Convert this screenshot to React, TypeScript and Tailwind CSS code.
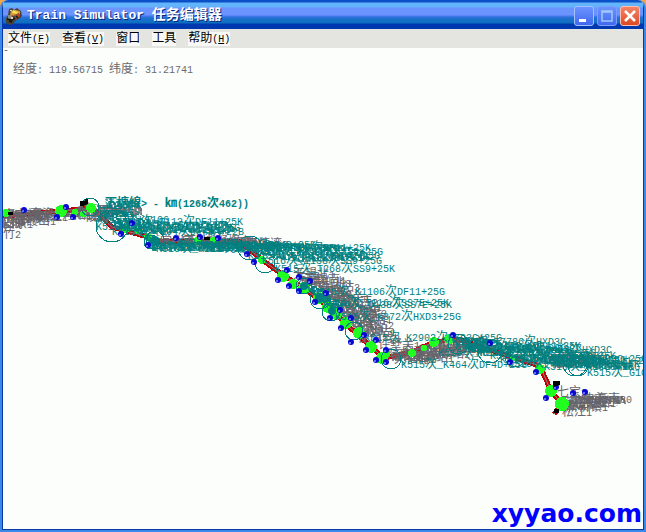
import React from 'react';

const TEAL = '#008080';
const GRAY = '#66646a';

type Label = [number, number, string];

const menus = [
  { label: '文件', hotkey: 'F' },
  { label: '查看', hotkey: 'V' },
  { label: '窗口' },
  { label: '工具' },
  { label: '帮助', hotkey: 'H' },
];

// station names
const stations: Label[] = [
  [3, 171, '南京站1'], [3, 180, '安东1'], [3, 190, '竹2'], [8, 174, '句容东1'],
  [14, 177, '栖霞山1'], [20, 172, '龙潭站2'], [30, 170, '高资1'], [38, 173, '镇江1'],
  [62, 171, '丹阳1'], [76, 170, '新丰镇3'], [86, 173, '陵口1'], [98, 167, '吕城1'],
  [160, 197, '常州西站1'], [182, 197, '常州站2'], [204, 198, '戚墅堰东1'], [232, 199, '洛社1'],
  [246, 200, '石塘湾2'],
  [293, 230, '无锡北1'], [296, 235, '无锡1'], [304, 236, '无锡南1'], [309, 239, '横山北3'],
  [318, 243, '硕放站3'], [322, 250, '望亭2'], [328, 254, '浒墅关1'], [336, 258, '苏州西2'],
  [340, 263, '苏州站1'], [345, 269, '官渎里3'], [350, 275, '外跨塘1'], [352, 281, '唯亭站2'],
  [354, 288, '正仪站1'], [358, 294, '昆山号3'], [378, 301, '许墅关1'],
  [388, 311, '陆家浜1'], [394, 315, '天福庵2'], [402, 308, '安亭站1'], [412, 314, '黄渡站1'],
  [418, 307, '封浜站2'], [428, 310, '南翔站1'], [438, 303, '桃浦站3'], [448, 300, '上海西2'],
  [456, 304, '江桥镇1'], [540, 315, '杨浦站3'], [552, 319, '张华浜2'], [566, 315, '北郊站1'],
  [557, 348, '七宝2'], [564, 359, '莘庄站1'], [570, 356, '上海南3'], [574, 359, '梅陇站1'],
  [584, 355, '上海南80'], [566, 363, '新桥镇1'], [562, 368, '松江1'],
];

// train services sitting on the line
const services: Label[] = [
  [98, 169, '南京站>'], [97, 175, 'K515次_K1106'], [117, 177, 'K515次_T113次DF11+25K'],
  [96, 182, 'K516次_K464'], [120, 183, 'K51次_1045次DF4D+25G'],
  [112, 187, 'K515次_T104次DF4DA+22B'], [150, 201, 'K515次_T7786次DF11+25K'],
  [156, 204, 'K516次_K282次SS7E+25G'], [160, 200, 'K515次_K372次SS9+25K'],
  [173, 203, 'K515次_1228次HXD3C+25G'], [190, 200, 'K515次_T116次DF4D+25K'],
  [206, 204, 'K516次_K290次DF11+25G'], [239, 203, 'K515次_T7787次DF11+25K'],
  [257, 207, 'K515次_K1805次SS9+25G'], [248, 211, 'K515次_T7785次DF4D+25G'],
  [262, 216, 'K516次_T138次SS9+25G'], [275, 224, 'K515次_T268次SS9+25K'],
  [313, 247, 'K515次_K1106次DF11+25G'], [323, 258, 'K515次_T116次SS7E+25K'],
  [326, 260, 'K516次_D138次SS7E+25K'], [335, 272, 'K515次_K372次HXD3+25G'],
  [364, 293, 'K515次_K2902次HXD3C+25G'], [401, 320, 'K515次_K464次DF4D+25G'],
  [438, 308, 'K515次_K284次HXD3C'], [452, 297, 'K515次_T7786次HXD3C'],
  [455, 301, 'K515次_1462次DF11+25K'], [467, 304, 'K516次_K188次HXD3C'],
  [476, 308, 'K515次_T110次SS9+25G'], [504, 305, 'K515次_D412次HXD3C'],
  [490, 311, 'K515次_K526次SS7E+25K'], [500, 315, 'K515次_T132次DF11+25G'],
  [515, 314, 'K515次_K518次HXD3C+25G'], [508, 319, 'K516次_T7786次DF4D+25K'],
  [530, 316, 'K515次_T104次DF11+25G'], [544, 322, 'K515次_K8358+25G'],
  [587, 328, 'K515次_G1002'],
];

// areas where labels pile up, far too dense to be read
const grayPiles = [
  '3,162 40,162 46,166 78,164 78,169 46,170 40,174 30,173 20,180 3,180',
  '76,160 86,154 100,157 142,159 142,167 112,170 98,174 78,170',
  '152,190 238,190 262,192 262,197 152,197',
  '296,228 304,228 320,235 340,238 352,246 360,256 376,262 378,274 384,284 378,290 364,288 346,272 316,247',
  '390,304 410,303 436,293 481,290 498,296 494,305 452,308 428,313 392,313',
  '544,308 600,308 606,317 556,320',
  '572,347 624,348 626,356 612,358 585,362 566,362',
];

const tealPiles = [
  '105,151 140,152 139,159 107,160',
  '104,164 122,162 142,170 170,174 228,173 238,183 220,187 178,184 156,188 140,182 116,181',
  '114,172 140,178 156,190 150,198 146,192 132,180 112,178',
  '152,195 230,194 298,195 342,197 364,203 372,212 300,214 268,209 250,203 152,203',
  '304,234 318,239 332,250 350,256 334,261 324,255 308,242',
  '454,288 480,290 545,298 584,303 600,310 632,315 634,322 570,320 520,311 470,303',
];

const circles = [
  [90, 159, 9], [112, 178, 16], [155, 192, 9], [151, 194, 7], [250, 200, 12], [265, 215, 10],
  [304, 238, 8], [320, 251, 10], [331, 264, 9], [354, 283, 9], [391, 311, 10],
  [458, 296, 10], [490, 303, 12], [515, 309, 10], [575, 316, 12], [578, 318, 10],
];

const blobs = [
  [6, 165, 4], [61, 163, 6], [75, 164, 3], [91, 160, 5], [126, 181, 4], [138, 182, 4],
  [148, 189, 4], [197, 193, 4], [213, 192, 3], [262, 212, 4], [283, 228, 6], [293, 236, 5],
  [304, 240, 6], [319, 250, 6], [328, 259, 6], [336, 266, 6], [346, 275, 6], [359, 285, 6],
  [371, 299, 6], [382, 310, 6], [386, 306, 4], [434, 294, 5], [449, 291, 5], [540, 321, 5],
  [551, 343, 6], [562, 356, 7], [412, 305, 4], [424, 300, 3], [513, 310, 3], [83, 166, 3],
];

const signals = [
  [24, 162], [66, 159], [57, 169], [73, 169], [121, 186], [132, 175], [148, 197],
  [176, 190], [200, 189], [218, 190], [247, 206], [254, 214], [287, 222], [278, 232],
  [299, 229], [289, 238], [310, 233], [299, 243], [326, 245], [315, 254], [340, 262],
  [330, 270], [351, 270], [341, 280], [364, 287], [351, 294], [376, 292], [366, 302],
  [386, 302], [376, 312], [386, 314], [490, 295], [510, 314], [536, 324], [546, 350],
  [556, 339], [573, 345], [585, 344], [453, 287],
];

const route =
  '0,168 30,166 61,163 92,160 112,179 148,189 155,193 240,194 265,214 283,227 304,240 328,259 346,276 371,299 384,310 412,304 434,294 458,291 490,302 540,318 551,343 562,356 554,366';

const MixedText = ({ text, className = '' }: { text: string; className?: string }) => (
  <>
    {(text.match(/[ -~]+|[^ -~]+/g) ?? []).map((part, i) => (
      <span key={i} className={/[ -~]/.test(part) ? className : ''}>{part}</span>
    ))}
  </>
);

const MapLabel = ({ x, y, text, bold }: { x: number; y: number; text: string; bold?: boolean }) => (
  <text x={x} y={y} fontSize="12" fontWeight={bold ? 700 : 400}>
    {(text.match(/[ -~]+|[^ -~]+/g) ?? []).map((part, i) => (
      <tspan key={i} fontSize={/[ -~]/.test(part) ? 10 : 12}>{part}</tspan>
    ))}
  </text>
);

const ScribblePattern = ({ id, color }: { id: string; color: string }) => (
  <pattern id={id} width="29" height="17" patternUnits="userSpaceOnUse">
    <path
      d="M0 1h5M7 1h3M12 1h7M21 1h6M2 3h4M9 3h8M20 3h3M26 3h3M0 5h7M10 5h4M16 5h9M3 7h6M12 7h3M18 7h7M27 7h2M0 9h4M6 9h8M17 9h3M22 9h6M2 11h7M12 11h7M21 11h3M0 13h3M6 13h5M14 13h9M25 13h4M4 15h7M15 15h4M22 15h5M2 0v6M5 5v8M8 0v4M9 7v9M13 0v12M16 4v10M19 1v5M20 8v9M23 0v8M25 7v8M28 2v10M1 9v7M11 10v6M17 13v4M4 8l5 7M22 4l5 6"
      fill="none"
      stroke={color}
      strokeWidth="1.4"
    />
  </pattern>
);

const TrainIcon = () => (
  <svg width="18" height="18" viewBox="0 0 18 18" aria-hidden="true">
    <path d="M4 2l3-1 2 2 3-2 4 3 1 5-3 3-3 1-3 4-3 1-4-2v-5l2-3z" fill="#4a4438" />
    <path d="M6 4l4-1 5 1v3l-5 2-5-1z" fill="#d49a32" />
    <path d="M8 3l5 2-1 2-5-1z" fill="#f1de58" />
    <path d="M3 8h4v4H3z" fill="#8b8b80" />
    <path d="M9 8l5-2 1 3-4 3z" fill="#ac4a2b" />
    <path d="M2 12l5 1 3-2M4 14l3 1M11 9l2 2" stroke="#151510" strokeWidth="1.5" fill="none" />
    <path d="M5 3h2v1H5zM6 10h2v2H6z" fill="#d8d8c8" />
  </svg>
);

const TitleBar = () => (
  <header className="flex h-[29px] items-center pt-[2px] pr-[3px] pl-[2px] [background-image:linear-gradient(#0c50c8_0_2px,#0c50c8_2px,#64b4fc_3px_7px,#6c94ff_8px_15px,#4a78f0_16px,#2070d0_18px,#0c70c0_23px,#0038b0_24px_29px)]">
    <TrainIcon />
    <h1 className="ml-1 flex-1 text-sm leading-4 font-bold whitespace-pre text-white [text-shadow:1px_1px_#082878]">
      <MixedText text="Train Simulator 任务编辑器" className="text-[13px]" />
    </h1>
    <div className="flex gap-[3px]">
      <button type="button" aria-label="Minimize" className="h-5 w-5 rounded-[3px] border border-[#a0c0ff] bg-linear-to-b from-[#6c94ff] to-[#4068f0]">
        <svg viewBox="0 0 18 18"><path d="M4 12h7v3H4z" fill="#fff" /></svg>
      </button>
      <button type="button" aria-label="Maximize" disabled className="h-5 w-5 rounded-[3px] border border-[#78a0ff] bg-linear-to-b from-[#6c94ff] to-[#4068f0]">
        <svg viewBox="0 0 18 18"><path d="M4 4h10v10H4zM4 5h10" fill="none" stroke="#a0c8fa" strokeWidth="1.5" /></svg>
      </button>
      <button type="button" aria-label="Close" className="h-5 w-5 rounded-[3px] border border-[#ffc0b0] bg-linear-to-b from-[#f48468] to-[#dc4820]">
        <svg viewBox="0 0 18 18"><path d="M4 4l10 10M14 4L4 14" stroke="#fff" strokeWidth="2.5" /></svg>
      </button>
    </div>
  </header>
);

const MenuBar = () => (
  <nav className="flex h-[19px] items-center gap-3 bg-[#e4e4e0] px-[5px]">
    {menus.map(({ label, hotkey }) => (
      <button key={label} type="button" className="h-[14px] bg-[#f8f8f6] text-xs leading-[14px] text-black">
        {label}
        {hotkey && <span className="text-[10px]">(<u>{hotkey}</u>)</span>}
      </button>
    ))}
  </nav>
);

const RouteMap = () => (
  <svg className="absolute inset-0 h-full w-full" role="img" aria-label="线路图">
    <defs>
      <ScribblePattern id="gray-pile" color={GRAY} />
      <ScribblePattern id="teal-pile" color={TEAL} />
    </defs>
    <g transform="translate(-3 0)">
      <polyline points={route} fill="none" stroke="#c40000" strokeWidth="5" shapeRendering="crispEdges" />
      <polyline points={route} fill="none" stroke="#8a878c" strokeWidth="1" />
      {grayPiles.map((points) => (
        <polygon key={points} points={points} fill="url(#gray-pile)" />
      ))}
      <g fill={GRAY}>
        {stations.map(([x, y, text]) => (
          <MapLabel key={text + x} x={x} y={y} text={text} />
        ))}
      </g>
      {blobs.map(([x, y, r], i) => (
        <circle key={i} cx={x} cy={y} r={r} fill="#20ff20" shapeRendering="crispEdges" />
      ))}
      {tealPiles.map((points) => (
        <polygon key={points} points={points} fill="url(#teal-pile)" />
      ))}
      <g fill="none" stroke={TEAL} shapeRendering="crispEdges">
        {circles.map(([x, y, r], i) => (
          <circle key={i} cx={x} cy={y} r={r} />
        ))}
      </g>
      <g fill={TEAL}>
        <circle cx="304" cy="238" r="4" />
        <circle cx="320" cy="250" r="5" />
        <circle cx="332" cy="263" r="4" />
        <circle cx="155" cy="193" r="5" />
        <MapLabel x={105} y={159} text="下塘線> - ㎞(1268次462))" bold />
        {services.map(([x, y, text]) => (
          <MapLabel key={text + x} x={x} y={y} text={text} />
        ))}
      </g>
      {signals.map(([x, y], i) => (
        <g key={i}>
          <circle cx={x} cy={y} r="3" fill="#0808d0" />
          <circle cx={x - 1} cy={y + 1} r="1" fill="#8094ff" />
        </g>
      ))}
      <path d="M80 153h5v-2h3v5l-4 2h-4zM8 164h5v3H8zM204 189h6v3h-6zM553 333h7v4l-7 2zM554 361h5v4h-5z" fill="#000" />
    </g>
  </svg>
);

export default function App() {
  return (
    <div className="bg-[#f0a848]">
      <div className="flex h-screen flex-col overflow-hidden rounded-t-lg border-x-2 border-b-2 border-[#3c88e8] bg-[#fcfefc] font-['Liberation_Mono','Noto_Sans_CJK_SC',monospace]">
        <div className="flex flex-1 flex-col border-x border-b border-[#0838a8]">
          <TitleBar />
          <MenuBar />
          <main className="relative flex flex-1 flex-col justify-between overflow-hidden">
            <RouteMap />
            <span className="absolute top-0 left-0 text-[10px] leading-[6px] text-[#6c6a6c]">-</span>
            <p className="mt-[14px] ml-[10px] text-xs leading-4 text-[#6c6a6c]">
              <MixedText text="经度: 119.56715 纬度: 31.21741" className="text-[10px] whitespace-pre" />
            </p>
            <a href="#xyyao" className="self-end pr-px pb-px font-['DejaVu_Sans',sans-serif] text-[25px] leading-7 font-bold text-[#0000ff]">
              xyyao.com
            </a>
          </main>
        </div>
      </div>
    </div>
  );
}
